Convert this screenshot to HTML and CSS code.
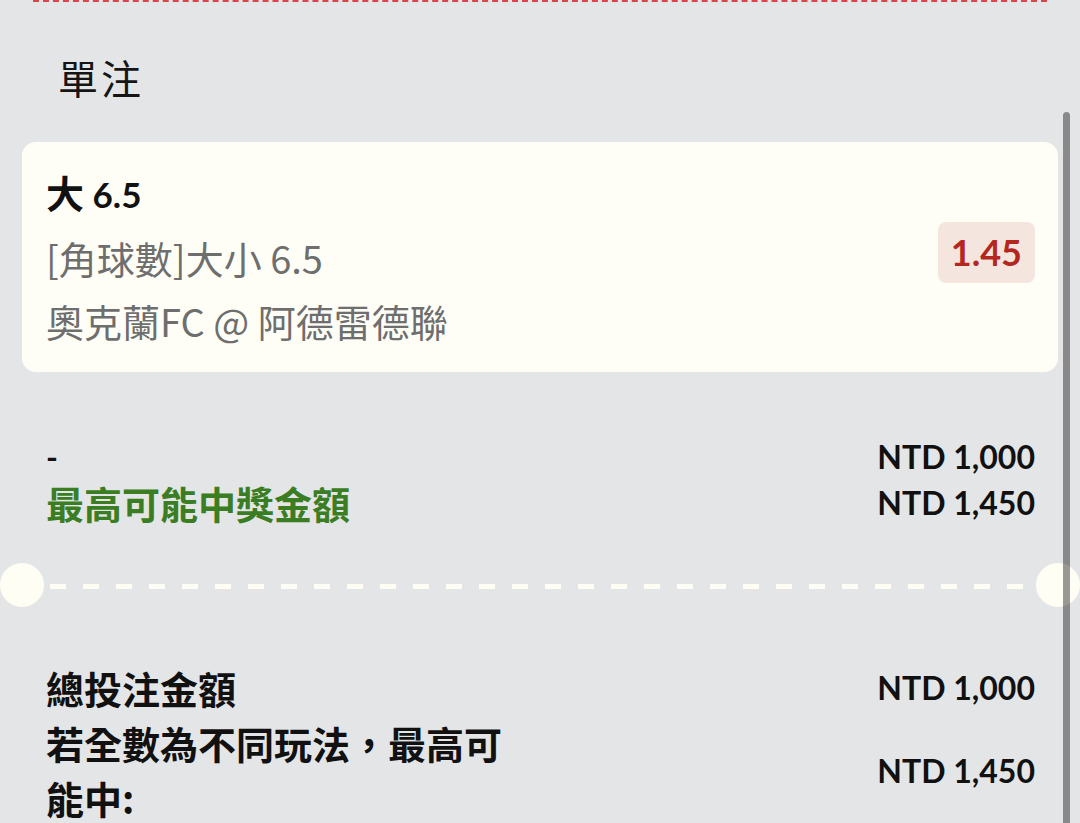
FILE: index.html
```html
<!DOCTYPE html>
<html lang="zh-TW">
<head>
  <meta charset="UTF-8">
  <meta name="viewport" content="width=device-width, initial-scale=1.0">
  <title>單注</title>
  <link rel="stylesheet" href="styles.css">
</head>
<body>
  <div class="tear"></div>
  <h2 class="title">單注</h2>

  <div class="card">
    <div class="card-info">
      <div class="pick"><span class="zh">大</span> 6.5</div>
      <div class="market">[角球數]大小 6.5</div>
      <div class="match">奧克蘭FC @ 阿德雷德聯</div>
    </div>
    <div class="odds">1.45</div>
  </div>

  <div class="rows top-rows">
    <div class="row">
      <span class="label dash">-</span>
      <span class="amount">NTD 1,000</span>
    </div>
    <div class="row">
      <span class="label win">最高可能中獎金額</span>
      <span class="amount">NTD 1,450</span>
    </div>
  </div>

  <!-- ticket perforation -->
  <div class="divider">
    <span class="notch"></span>
    <span class="dashes"></span>
    <span class="notch"></span>
  </div>

  <div class="rows totals">
    <div class="row">
      <span class="label">總投注金額</span>
      <span class="amount">NTD 1,000</span>
    </div>
    <div class="row">
      <span class="label">若全數為不同玩法，最高可能中:</span>
      <span class="amount">NTD 1,450</span>
    </div>
  </div>

  <div class="scrollbar"></div>
</body>
</html>
```

FILE: styles.css
```css
* {
  box-sizing: border-box;
}
html, body {
  height: 100%;
  overflow: hidden;
}
body {
  margin: 0;
  position: relative;
  background-color: #e4e5e7;
  font-family: Lato, "Noto Sans CJK TC", sans-serif;
  color: #111;
}
.tear {
  height: 2px;
  margin: 0 33px;
  border-top: 2px dashed #d8464b;
}
.title {
  margin: 50px 0 0 58px;
  font-family: "Noto Sans CJK TC", sans-serif;
  font-weight: 400;
  font-size: 40px;
  line-height: 50px;
  letter-spacing: 3px;
  color: #151515;
}
.card {
  display: flex;
  align-items: center;
  justify-content: space-between;
  margin: 40px 22px 0;
  padding: 21px 23px 20px 24px;
  background: #fffef6;
  border-radius: 14px;
}
.card-info > div {
  height: 63px;
  line-height: 63px;
  white-space: nowrap;
}
.pick {
  font-weight: 700;
  font-size: 35px;
}
.zh {
  font-family: "Noto Sans CJK TC", sans-serif;
  font-size: 38px;
  line-height: 0;
}
.market,
.match {
  font-family: "Noto Sans CJK TC", sans-serif;
  font-size: 38px;
  color: #6e6e6e;
}
.odds {
  margin-bottom: 10px;
  padding: 0 13px;
  background: #f5e5df;
  color: #b3271e;
  font-weight: 700;
  font-size: 36px;
  line-height: 61px;
  border-radius: 8px;
}
.rows {
  padding: 0 45px 0 46px;
}
.row {
  display: flex;
  align-items: center;
  justify-content: space-between;
}
.label {
  max-width: 480px;
  font-family: "Noto Sans CJK TC", sans-serif;
  font-weight: 700;
  font-size: 38px;
}
.label.dash {
  font-family: Lato, sans-serif;
  font-size: 32px;
}
.win {
  color: #3b7d23;
}
.amount {
  font-weight: 700;
  font-size: 32px;
}
.top-rows {
  margin-top: 62px;
  line-height: 46px;
}
.divider {
  display: flex;
  align-items: center;
  height: 44px;
  margin-top: 37px;
}
.notch {
  flex: none;
  width: 44px;
  height: 44px;
  border-radius: 50%;
  background: #fffef4;
}
.dashes {
  flex: 1;
  height: 5px;
  margin: 2px 6px 0;
  background: repeating-linear-gradient(90deg, #fffef4 0 16px, transparent 16px 33px);
}
.totals {
  display: flex;
  flex-direction: column;
  margin-top: 53px;
  line-height: 55px;
}
.scrollbar {
  position: absolute;
  top: 112px;
  right: 10px;
  width: 7px;
  height: 711px;
  background: rgba(0, 0, 0, 0.4);
  border-radius: 4px 4px 0 0;
}
```
